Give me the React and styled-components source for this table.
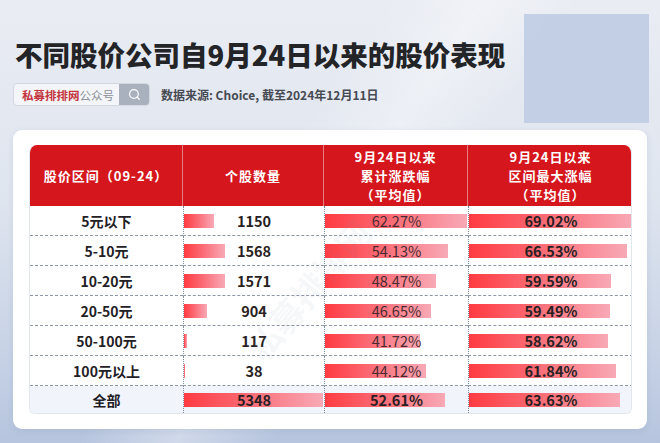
import React from "react";
import styled, { createGlobalStyle } from "styled-components";
import { Search } from "lucide-react";

const GlobalStyle = createGlobalStyle`
  html, body {
    margin: 0;
    padding: 0;
  }
  body {
    width: 660px;
    height: 443px;
    overflow: hidden;
    font-family: "Noto Sans CJK SC", "Noto Sans", sans-serif;
  }
`;

const rows = [
  { label: "5元以下", count: 1150, chg: 62.27, max: 69.02 },
  { label: "5-10元", count: 1568, chg: 54.13, max: 66.53 },
  { label: "10-20元", count: 1571, chg: 48.47, max: 59.59 },
  { label: "20-50元", count: 904, chg: 46.65, max: 59.49 },
  { label: "50-100元", count: 117, chg: 41.72, max: 58.62 },
  { label: "100元以上", count: 38, chg: 44.12, max: 61.84 },
];
const total = { label: "全部", count: 5348, chg: 52.61, max: 63.63 };

// bar widths in px for the largest value of each column
const COL = { count: 139, chg: 142, max: 164 };
const TOP = { count: 5348, chg: 62.27, max: 69.02 };

const BarCell = ({ value, field, text, $bold, $total }) => (
  <Cell $total={$total} $bar>
    <Bar style={{ width: `${(value / TOP[field]) * COL[field]}px` }} />
    <BarText $bold={$bold}>{text}</BarText>
  </Cell>
);

const App = () => {
  return (
    <Page>
      <GlobalStyle />
      <Deco />
      <Title>不同股价公司自9月24日以来的股价表现</Title>
      <SubRow>
        <SearchBox>
          <SearchText>
            <Brand>私募排排网</Brand>公众号
          </SearchText>
          <SearchBtn>
            <Search size={13} strokeWidth={2.2} />
          </SearchBtn>
        </SearchBox>
        <Source>数据来源: Choice, 截至2024年12月11日</Source>
      </SubRow>
      <Card>
        <Table>
          <Head>股价区间（09-24）</Head>
          <Head>个股数量</Head>
          <Head>
            <HeadLine>9月24日以来</HeadLine>
            <HeadLine>累计涨跌幅</HeadLine>
            <HeadLine>（平均值）</HeadLine>
          </Head>
          <Head $last>
            <HeadLine>9月24日以来</HeadLine>
            <HeadLine>区间最大涨幅</HeadLine>
            <HeadLine>（平均值）</HeadLine>
          </Head>
          {rows.map((r) => (
            <React.Fragment key={r.label}>
              <Cell>
                <Label>{r.label}</Label>
              </Cell>
              <BarCell value={r.count} field="count" text={r.count} $bold />
              <BarCell value={r.chg} field="chg" text={`${r.chg.toFixed(2)}%`} />
              <BarCell value={r.max} field="max" text={`${r.max.toFixed(2)}%`} $bold />
            </React.Fragment>
          ))}
          <Cell $total>
            <Label>{total.label}</Label>
          </Cell>
          <BarCell value={total.count} field="count" text={total.count} $bold $total />
          <BarCell value={total.chg} field="chg" text={`${total.chg}%`} $bold $total />
          <BarCell value={total.max} field="max" text={`${total.max}%`} $bold $total />
        </Table>
        <Watermark>私募排排网</Watermark>
      </Card>
    </Page>
  );
};

const Page = styled.div`
  position: relative;
  width: 660px;
  height: 443px;
  box-sizing: border-box;
  padding: 37px 13px 0 13px;
  overflow: hidden;
  background:
    linear-gradient(125deg, rgba(255, 255, 255, 0) 40%, rgba(255, 255, 255, 0.35) 50%, rgba(255, 255, 255, 0) 60%),
    linear-gradient(180deg, #e9ecf3 0%, #dfe5ef 45%, #c3cfe4 85%, #b6c4de 100%);
`;

const Deco = styled.div`
  position: absolute;
  left: 524px;
  top: 14px;
  width: 125px;
  height: 109px;
  background: #bccae2;
  opacity: 0.85;
`;

const Title = styled.h1`
  position: relative;
  margin: 0 0 12px 2px;
  font-size: 27.5px;
  line-height: 34px;
  font-weight: 900;
  color: #232427;
`;

const SubRow = styled.div`
  display: flex;
  align-items: center;
  gap: 11px;
  height: 23px;
`;

const SearchBox = styled.div`
  display: flex;
  height: 23px;
  width: 137px;
  border: 1px solid #d3d8e1;
  border-radius: 4px;
  overflow: hidden;
  box-sizing: border-box;
  background: #f4f5f8;
`;

const SearchText = styled.div`
  flex: 1;
  display: flex;
  align-items: center;
  padding-left: 8px;
  font-size: 11.5px;
  color: #8a8f99;
  white-space: nowrap;
`;

const Brand = styled.span`
  color: #c4363f;
  font-weight: 700;
`;

const SearchBtn = styled.div`
  width: 30px;
  display: flex;
  align-items: center;
  justify-content: center;
  background: #aab1be;
  color: #fff;
`;

const Source = styled.div`
  font-size: 12px;
  font-weight: 700;
  color: #464a52;
`;

const Card = styled.div`
  position: relative;
  margin-top: 24px;
  width: 634px;
  height: 299px;
  box-sizing: border-box;
  padding: 15px 15px 16px 16px;
  background: #fff;
  border-radius: 9px;
  box-shadow: 0 2px 6px rgba(120, 140, 170, 0.18);
`;

const Table = styled.div`
  display: grid;
  grid-template-columns: 153px 141px 144px 165px;
  grid-template-rows: 61px repeat(6, 30px) 27px;
  border-radius: 8px 8px 6px 6px;
  border: 1px solid #e1e6ed;
  border-top: none;
  overflow: hidden;
`;

const Head = styled.div`
  display: flex;
  flex-direction: column;
  align-items: center;
  justify-content: center;
  text-align: center;
  background: #d5161d;
  color: #fff;
  font-size: 13px;
  font-weight: 700;
  letter-spacing: 1px;
  line-height: 19px;
  border-right: ${({ $last }) => ($last ? "none" : "1px solid rgba(255, 255, 255, 0.45)")};
`;

const HeadLine = styled.span`
  display: block;
  height: 19px;
`;

const Cell = styled.div`
  position: relative;
  display: flex;
  align-items: center;
  justify-content: center;
  background: ${({ $total }) => ($total ? "#f1f5fb" : "#fff")};
  border-bottom: ${({ $total }) => ($total ? "none" : "1px dashed #8e97a6")};
  border-left: ${({ $bar }) => ($bar ? "1px dotted #7f8a9b" : "none")};
`;

const Label = styled.span`
  font-size: 14px;
  font-weight: 700;
  color: #1f2126;
`;

const Bar = styled.div`
  position: absolute;
  left: 0;
  top: 50%;
  height: 14px;
  transform: translateY(-50%);
  background: linear-gradient(90deg, #ff3b42 0%, #fb6a74 45%, #f8a9b6 100%);
`;

const BarText = styled.span`
  position: relative;
  font-size: 14.5px;
  font-weight: ${({ $bold }) => ($bold ? 700 : 400)};
  color: ${({ $bold }) => ($bold ? "#2a1f22" : "#4b2a2f")};
`;

const Watermark = styled.div`
  position: absolute;
  left: 210px;
  top: 135px;
  font-size: 34px;
  font-weight: 700;
  color: rgba(120, 130, 150, 0.07);
  transform: rotate(-50deg);
  pointer-events: none;
  white-space: nowrap;
`;

export default App;
